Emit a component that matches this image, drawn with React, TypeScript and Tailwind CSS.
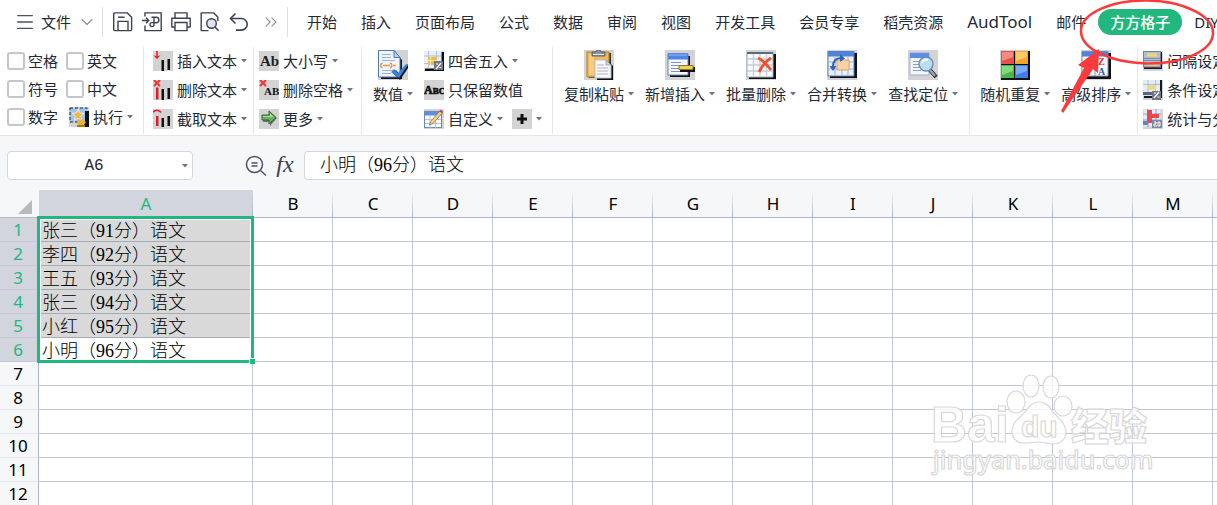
import type { ReactNode } from "react";
import { ChevronDown, ChevronsRight, Menu } from "lucide-react";

const tabs = [
  "开始",
  "插入",
  "页面布局",
  "公式",
  "数据",
  "审阅",
  "视图",
  "开发工具",
  "会员专享",
  "稻壳资源",
  "AudTool",
  "邮件",
  "方方格子",
  "DIY工具箱",
];

const activeTab = "方方格子";

const columns = ["A", "B", "C", "D", "E", "F", "G", "H", "I", "J", "K", "L", "M", "N"];

const cellValues = [
  "张三（91分）语文",
  "李四（92分）语文",
  "王五（93分）语文",
  "张三（94分）语文",
  "小红（95分）语文",
  "小明（96分）语文",
];

const rows = Array.from({ length: 14 }, (_, index) => index + 1);

function Caret() {
  return (
    <svg viewBox="0 0 6 4" className="h-1 w-1.5 shrink-0" aria-hidden="true">
      <path d="M0 0h6L3 3.6z" fill="#6b7388" />
    </svg>
  );
}

function Tile({ children, size = 20 }: { children?: ReactNode; size?: 20 | 30 }) {
  return (
    <svg
      viewBox={`0 0 ${size} ${size}`}
      className={size === 30 ? "h-[30px] w-[30px] shrink-0" : "h-5 w-5 shrink-0"}
      aria-hidden="true"
    >
      <rect width={size} height={size} fill="#d3d3d3" />
      {children}
    </svg>
  );
}

/* quick access icons */

function SaveIcon() {
  return (
    <svg viewBox="0 0 20 20" className="h-5 w-5" fill="none" stroke="#3b4252" strokeWidth="1.4">
      <path d="M1.7.9h12.6l4.3 4.3v12.2a1.2 1.2 0 0 1-1.2 1.2H1.7a1 1 0 0 1-1-1V1.9a1 1 0 0 1 1-1z" />
      <path d="M5 18.2V9.4h10v8.8M5 5.2h6.5" />
    </svg>
  );
}

function ExportPdfIcon() {
  return (
    <svg viewBox="0 0 20 20" className="h-5 w-5" fill="none" stroke="#3b4252" strokeWidth="1.4">
      <path d="M3 4.500V.9h16.200v17.700H3v-5" />
      <path d="M0 8.500h6.500M4 5.800l2.700 2.700L4 11.200" />
      <path d="M9.500 5.200h4.600a2.800 2.800 0 0 1 0 5.600H12M12 5.200v7.400a2 2 0 1 1-2-2h2" />
    </svg>
  );
}

function PrintIcon() {
  return (
    <svg viewBox="0 0 20 20" className="h-5 w-5" fill="none" stroke="#3b4252" strokeWidth="1.4">
      <path d="M4 6V.9h12V6" />
      <path d="M4 15H.8V6.200h18.400V15H16" strokeLinejoin="round" />
      <path d="M4 10.500h12v8.100H4z" />
    </svg>
  );
}

function PreviewIcon() {
  return (
    <svg viewBox="0 0 20 20" className="h-5 w-5" fill="none" stroke="#3b4252" strokeWidth="1.4">
      <path d="M8.500 18.600H1.200V.9h12.600l4 4V9" strokeLinejoin="round" />
      <circle cx="11.500" cy="11.500" r="4.800" fill="#dfe4ea" />
      <path d="m15 15 3.600 3.800" />
    </svg>
  );
}

function UndoIcon() {
  return (
    <svg viewBox="0 0 20 20" className="h-5 w-5" fill="none" stroke="#3b4252" strokeWidth="1.6">
      <path d="M6.500 1.500 1.500 6.500l5 5" />
      <path d="M1.800 6.500h10.600a5.800 5.800 0 0 1 0 11.600H7" />
    </svg>
  );
}

/* small ribbon icons, 20 x 20 */

function RunIcon() {
  return (
    <Tile>
      <rect x="1" y="1" width="17" height="14" fill="#9cc6ee" stroke="#1f2a38" strokeDasharray="3 2" />
      <path d="M16 4h4v16H9l1-4h6z" fill="#111" />
      <path d="m9 2 1.800 4 4.200.4-3.200 2.800 1 4.200L9 11.200l-3.800 2.200 1-4.200L3 6.400 7.200 6z" fill="#ffb545" stroke="#fff" strokeWidth=".7" />
      <path d="M8 15c2-3 4-3 7-1l2 1-2 3H9z" fill="#e9b22f" />
      <path d="M8 18h8v2H8z" fill="#a6780f" />
    </Tile>
  );
}

function TextInsertIcon() {
  return (
    <Tile>
      <path d="M8.500 9H11v11H8.500zM14.500 8H17v11h-2.500z" fill="#111" />
      <path d="M4 0v6" stroke="#f0131a" strokeWidth="1.500" />
      <path d="M.5 4.200 4 5.500l3.500-1.300L4 8z" fill="#f0131a" />
    </Tile>
  );
}

function TextDeleteIcon() {
  return (
    <Tile>
      <path d="M8.500 9H11v11H8.500zM14.500 8H17v11h-2.500z" fill="#111" />
      <path d="M3 7.500h2.500v12H3z" fill="#d5202a" />
      <path d="m1 0 6 6M7 0 1 6" stroke="#ee3a3a" strokeWidth="2.200" />
    </Tile>
  );
}

function TextCutIcon() {
  return (
    <Tile>
      <path d="M8.500 9H11v9H8.500zM14.500 7H17v10h-2.500z" fill="#111" />
      <path d="M3 7h2.500v10H3z" fill="#d5202a" />
      <path d="M0 3.500C1.500.500 6 .500 8 3.500" fill="none" stroke="#f0131a" strokeWidth="1.600" />
    </Tile>
  );
}

function CaseIcon() {
  return (
    <Tile>
      <text x="1" y="15" fontFamily="Liberation Serif, serif" fontWeight="700" fontSize="15" fill="#222">
        Ab
      </text>
    </Tile>
  );
}

function DeleteSpaceIcon() {
  return (
    <Tile>
      <text x="5" y="15" fontFamily="Liberation Serif, serif" fontWeight="700" fontSize="11" fill="#111">
        AB
      </text>
      <path d="m1 0 6 6M7 0 1 6" stroke="#ee3a3a" strokeWidth="2.200" />
    </Tile>
  );
}

function MoreIcon() {
  return (
    <Tile>
      <path d="M4 7h7V3l7 6-7 8v-4H4z" fill="#333" opacity=".6" />
      <path d="M3 6h7V2l7 6.500L10 15v-4H3z" fill="#69b25e" stroke="#2d5b2d" strokeWidth=".9" />
      <path d="M4 7h7V4.500L14.500 8H4z" fill="#a9dba0" />
    </Tile>
  );
}

function RoundIcon() {
  return (
    <Tile>
      <path d="M17 1h3v19H1v-3h16z" fill="#111" />
      <rect x="0" y="0" width="17.500" height="17.500" fill="#e9eff8" />
      <path d="M0 5h17M0 12.500h17M4.500 0v17M12.500 0v17" stroke="#a9b5cb" strokeWidth=".8" />
      <path d="M4 6h9v8H4z" fill="#e6c04a" />
      <path d="M6.500 6v8M4 9.500h9" stroke="#fff0b0" strokeWidth=".8" />
      <path d="M10 10h9v9h-9z" fill="#707786" />
      <path d="m12 18 5-6M12 13h2M15.500 16.500h2" stroke="#fff" strokeWidth="1.200" />
    </Tile>
  );
}

function KeepValueIcon() {
  return (
    <Tile>
      <g fontFamily="Liberation Serif, serif" fontWeight="700" fill="#111" stroke="#111" strokeWidth=".7">
        <text x="0" y="14" fontSize="12">
          A<tspan fontSize="9">BC</tspan>
        </text>
      </g>
    </Tile>
  );
}

function CustomIcon() {
  return (
    <Tile>
      <rect x=".5" y="2.500" width="17" height="16" fill="#fafcff" stroke="#6b8bbd" />
      <path d="M1 3h16v3.500H1z" fill="#5d8fe0" />
      <path d="M1 10.500h16M1 14.500h16M6 7v12M11.500 7v12" stroke="#b4c4df" />
      <path d="m5.500 16 1-3.500L16 2l2.500 2L9 14.500z" fill="#f1cf86" stroke="#8b6428" strokeWidth=".7" />
      <path d="M15.500 2.200 18 4.300l1.200-1.600-2.500-2z" fill="#b8404a" />
    </Tile>
  );
}

function PlusIcon() {
  return (
    <Tile>
      <path d="M10 5v10M5 10h10" stroke="#111" strokeWidth="3" />
    </Tile>
  );
}

function IntervalIcon() {
  return (
    <Tile>
      <path d="M17 1h2v17H1v-2h16z" fill="#151a22" />
      <rect x=".5" y=".5" width="17" height="15.500" fill="#b5bfcf" stroke="#76829a" />
      <path d="M1 7.500h16M1 9.500h16" stroke="#7d899e" />
      <path d="M4 2.500h10v3H4zM4 11.500h10v3H4z" fill="#f0d779" />
    </Tile>
  );
}

function ConditionIcon() {
  return (
    <Tile>
      <path d="M17 0h2v18H1v-2h16z" fill="#151a22" />
      <rect x="0" y="0" width="17" height="15.500" fill="#e5ebf4" />
      <path d="M0 4.500h17M5 0v15M12.500 0v15" stroke="#aab4c6" strokeWidth=".8" />
      <path d="M4 5.500h9v4H4z" fill="#f0d779" />
      <path d="M0 12h14v3H0z" fill="#5a667d" />
      <path d="M9 11h9v9H9z" fill="#707786" />
      <path d="m11 18 5-6M11 13h2M14.500 17h2" stroke="#fff" strokeWidth="1.200" />
    </Tile>
  );
}

function StatsIcon() {
  return (
    <Tile>
      <rect x=".5" y=".5" width="17" height="17" fill="#e4ecf8" />
      <path d="M0 5h18M0 11h18M5 0v18M13 0v18" stroke="#8aa0c8" />
      <path d="M4 1h5v13H4z" fill="#e8474f" />
      <path d="M8 5h8v4H8z" fill="#e8474f" />
      <path d="M0 12h5v4H0z" fill="#5d83c9" />
      <path d="M9 11h10v8H9z" fill="#7c8798" />
      <path d="M11 13h2v2h-2v2h3M15 13h2v4h-2z" stroke="#fff" fill="none" />
    </Tile>
  );
}

/* large ribbon icons, 30 x 30 */

function ValueIcon() {
  return (
    <Tile size={30}>
      <path d="M3 3h15l6 7v19H3z" fill="#14181e" />
      <path d="M.5.500H16l6 7V27H.5z" fill="#eef4fc" stroke="#4f78b4" />
      <path d="M16 .5v7h6z" fill="#b8d0ee" stroke="#4f78b4" />
      <path d="M4 4.500h9M4 7.500h9M4 10.500h13M4 20.500h11M4 23.500h9" stroke="#9db1d2" />
      <path d="M4.500 13C2 14 2 17 4.500 18M12 13c2.500 1 2.500 4 0 5M5 15.500h7M15 15.500h3" stroke="#ee9448" strokeWidth="1.500" fill="none" />
      <path d="m15 23 3-3 4 5 8-11v4l-8 12z" fill="#111" />
      <path d="m13 22 3-3 4 4 8-9 2 1-9 13z" fill="#3b7fd8" />
    </Tile>
  );
}

function PasteIcon() {
  return (
    <Tile size={30}>
      <path d="M5 3h22v25H5z" fill="#15110a" opacity=".8" />
      <path d="M3 2h22v25H3z" fill="#eeb85b" stroke="#b47b2b" />
      <path d="M5 4h5v21H5z" fill="#f6cb7d" />
      <path d="M8 2h4c0-3 5-3 5 0h4v4H8z" fill="#8a929f" stroke="#4c535e" strokeWidth=".8" />
      <path d="M9 4.500h11" stroke="#e4e8ee" />
      <path d="M13 12h12l4 4v14H13z" fill="#111" />
      <path d="M11 10h11l5 5v13H11z" fill="#f6f8fb" stroke="#b9c0ca" />
      <path d="M22 10v5h5z" fill="#c9d0da" stroke="#8d96a5" strokeWidth=".7" />
      <path d="M13 15h7M13 18h11M13 21h11M13 24h11" stroke="#b0b8c4" />
    </Tile>
  );
}

function InsertIcon() {
  return (
    <Tile size={30}>
      <path d="M5 6h20v21H5z" fill="#111" />
      <path d="M3 3.500h20V25H3z" fill="#f3f6fb" stroke="#7288b0" />
      <path d="M3 3.500h20v6H3z" fill="#4f86e6" />
      <path d="M4 5h18" stroke="#96b9f5" />
      <path d="M6 12.500h10M6 15.500h13M6 18.500h8M6 21.500h9" stroke="#8793a8" />
      <path d="M15 17h15v5H15z" fill="#111" />
      <path d="M14 15.500h14v4H14z" fill="#f0d358" stroke="#8e7425" />
    </Tile>
  );
}

function BatchDeleteIcon() {
  return (
    <Tile size={30}>
      <path d="M3 4h27v25H3z" fill="#111" />
      <path d="M1 2.500h26V27H1z" fill="#f8fafc" stroke="#a3adb8" />
      <path d="M1 3h26" stroke="#5b6a80" strokeWidth="2" />
      <path d="M1 9h26M1 15h26M1 21h26M7.500 4v23M14 4v23M20.500 4v23" stroke="#c6ccd3" strokeWidth="1.300" />
      <path d="M12 8c5 2 9 7 13 12M25 8c-5 3-9 8-12 14" stroke="#f2502e" strokeWidth="2.800" fill="none" />
    </Tile>
  );
}

function MergeIcon() {
  return (
    <Tile size={30}>
      <path d="M3 3h27v25H3z" fill="#111" />
      <path d="M1 1.500h26V26H1z" fill="#e9f0fa" stroke="#5b7fb8" />
      <path d="M1 1.500h26v5H1z" fill="#4f82d8" />
      <path d="M1 12h26M1 19h26M8 7v19M15 7v19M21 7v19" stroke="#93b0dc" />
      <path d="M10 10h12v10H10z" fill="#f8d2a4" stroke="#e3a25d" />
      <path d="M6 17c0-6 3-9 8-9" fill="none" stroke="#3263b3" strokeWidth="2" />
      <path d="m13 4 5 4.500-5 3.500zM2.500 16h7L6 21z" fill="#3263b3" />
    </Tile>
  );
}

function FindIcon() {
  return (
    <Tile size={30}>
      <path d="M2 3h19v22H2z" fill="#f2f6fb" stroke="#a4b2c8" />
      <path d="M2 3h19v5H2z" fill="#5b8ee6" />
      <path d="M5 11.500h8M5 14.500h7M5 17.500h6M5 20.500h8" stroke="#8fa0bd" />
      <path d="m22 20 6 7" stroke="#222" strokeWidth="4" />
      <path d="m22 20 5 6" stroke="#a0a7b2" strokeWidth="2.500" />
      <circle cx="18" cy="14" r="7" fill="#b9ddf5" stroke="#7489a3" strokeWidth="1.400" />
      <path d="M14 13c1-3 4-4 6-3" fill="none" stroke="#fff" strokeWidth="1.500" />
    </Tile>
  );
}

function RandomIcon() {
  return (
    <Tile size={30}>
      <path d="M1 1h29v29H1z" fill="#111" />
      <path d="M1 1h13v13H1z" fill="#e94f4a" />
      <path d="M15 1h13v13H15z" fill="#f3a625" />
      <path d="M1 15h13v13H1z" fill="#47b948" />
      <path d="M15 15h13v13H15z" fill="#3f7de8" />
      <path d="M2 2h11v5L2 11z" fill="#f78983" />
      <path d="M16 2h11v5l-11 4z" fill="#f9c965" />
      <path d="M2 16h11v5L2 25z" fill="#83da7c" />
      <path d="M16 16h11v5l-11 4z" fill="#7aa9f5" />
    </Tile>
  );
}

function SortIcon() {
  return (
    <Tile size={30}>
      <path d="M3 3h27v26H3z" fill="#111" />
      <path d="M1 1.500h26V26H1z" fill="#f1f4f9" stroke="#8797b0" />
      <path d="M1 1.500h26v5H1z" fill="#4f82d8" />
      <path d="M14 7v19" stroke="#8797b0" />
      <g fontFamily="Liberation Serif, serif" fontWeight="700" fontSize="10">
        <text x="3" y="15" fill="#3f5f9e">A</text>
        <text x="3" y="25" fill="#c03a3a">Z</text>
        <text x="17" y="15" fill="#c03a3a">Z</text>
        <text x="17" y="25" fill="#3f5f9e">A</text>
      </g>
    </Tile>
  );
}

function SmallAction({ icon, label, caret = true }: { icon: ReactNode; label: string; caret?: boolean }) {
  return (
    <button type="button" className="flex h-5 items-center gap-1 whitespace-nowrap">
      {icon}
      <span>{label}</span>
      {caret ? <Caret /> : null}
    </button>
  );
}

function LargeAction({ icon, label }: { icon: ReactNode; label: string }) {
  return (
    <button type="button" className="flex flex-col items-center gap-1 whitespace-nowrap">
      {icon}
      <span className="flex h-5 items-center gap-1">
        <span>{label}</span>
        <Caret />
      </span>
    </button>
  );
}

function Separator() {
  return <div className="h-[87px] w-px shrink-0 bg-[#e6e7ea]" />;
}

function CheckOption({ label }: { label: string }) {
  return (
    <label className="flex h-5 items-center gap-[3px] whitespace-nowrap">
      <input
        type="checkbox"
        className="h-[18px] w-[18px] shrink-0 appearance-none rounded-[3px] border-2 border-[#c3c6cb] bg-white checked:bg-[#22b77d]"
      />
      {label}
    </label>
  );
}

/* hand drawn ring and pointer over the active tab */
function TabMarker() {
  return (
    <svg
      viewBox="0 0 160 120"
      className="pointer-events-none absolute -left-10 -top-[9px] z-10 h-[120px] w-40 max-w-none"
      aria-hidden="true"
    >
      <ellipse cx="89" cy="32" rx="66" ry="31.500" fill="none" stroke="#fb3b3b" strokeWidth="2.500" transform="rotate(1 89 32)" />
      <path d="M41 49 20 65l6 3L3 111l2 2 30-44 5 4z" fill="#fb3b3b" />
    </svg>
  );
}

function MenuBar() {
  return (
    <header className="flex h-11 shrink-0 items-center">
      <button type="button" className="ml-3.5 flex shrink-0 items-center whitespace-nowrap">
        <Menu size={22} strokeWidth={1.5} color="#4b5260" />
        <span className="ml-[5px]">文件</span>
        <ChevronDown size={20} strokeWidth={1.3} color="#8a8f99" className="ml-1.5" />
      </button>
      <div className="ml-[5px] h-[30px] w-px shrink-0 bg-[#dcdde1]" />
      <div className="ml-2.5 flex shrink-0 items-center gap-[9px]">
        <button type="button" aria-label="保存"><SaveIcon /></button>
        <button type="button" aria-label="输出为PDF"><ExportPdfIcon /></button>
        <button type="button" aria-label="打印"><PrintIcon /></button>
        <button type="button" aria-label="打印预览"><PreviewIcon /></button>
        <button type="button" aria-label="撤销"><UndoIcon /></button>
      </div>
      <button type="button" aria-label="更多命令" className="ml-3 shrink-0">
        <ChevronsRight size={20} strokeWidth={1.3} color="#8a8f99" />
      </button>
      <div className="ml-1.5 h-[30px] w-px shrink-0 bg-[#dcdde1]" />
      <nav className="ml-[7px] flex items-center">
        {tabs.map((tab) =>
          tab === activeTab ? (
            <div key={tab} className="relative shrink-0">
              <button type="button" className="block h-[26px] rounded-full bg-[#22b77d] px-3 font-medium whitespace-nowrap text-white">
                {tab}
              </button>
              <TabMarker />
            </div>
          ) : (
            <button
              key={tab}
              type="button"
              className={["h-[26px] shrink-0 px-3 whitespace-nowrap", tab === "AudTool" ? "text-[17px]" : ""].join(" ")}
            >
              {tab}
            </button>
          ),
        )}
      </nav>
    </header>
  );
}

function Ribbon() {
  return (
    <section className="flex h-[92px] shrink-0 items-start overflow-hidden border-b border-[#e4e6ea] pt-[3px]">
      <div className="grid shrink-0 grid-cols-[59px_77px] gap-y-2 pt-1 pl-[7px]">
        <CheckOption label="空格" />
        <CheckOption label="英文" />
        <CheckOption label="符号" />
        <CheckOption label="中文" />
        <CheckOption label="数字" />
        <div className="pl-[3px]">
          <SmallAction icon={<RunIcon />} label="执行" />
        </div>
      </div>
      <Separator />
      <div className="flex shrink-0 flex-col gap-[9px] pt-1 pr-1.5 pl-[9px]">
        <SmallAction icon={<TextInsertIcon />} label="插入文本" />
        <SmallAction icon={<TextDeleteIcon />} label="删除文本" />
        <SmallAction icon={<TextCutIcon />} label="截取文本" />
      </div>
      <Separator />
      <div className="flex shrink-0 flex-col gap-[9px] pt-1 pr-2 pl-[5px]">
        <SmallAction icon={<CaseIcon />} label="大小写" />
        <SmallAction icon={<DeleteSpaceIcon />} label="删除空格" />
        <SmallAction icon={<MoreIcon />} label="更多" />
      </div>
      <Separator />
      <div className="flex shrink-0 gap-[11px] pt-[3px] pl-[11px]">
        <LargeAction icon={<ValueIcon />} label="数值" />
        <div className="flex flex-col gap-[9px] pt-px pr-2.5">
          <SmallAction icon={<RoundIcon />} label="四舍五入" />
          <SmallAction icon={<KeepValueIcon />} label="只保留数值" caret={false} />
          <div className="flex gap-[9px]">
            <SmallAction icon={<CustomIcon />} label="自定义" />
            <button type="button" aria-label="新增" className="flex items-center gap-1">
              <PlusIcon />
              <Caret />
            </button>
          </div>
        </div>
      </div>
      <Separator />
      <div className="flex shrink-0 gap-[11px] px-[11px] pt-[3px]">
        <LargeAction icon={<PasteIcon />} label="复制粘贴" />
        <LargeAction icon={<InsertIcon />} label="新增插入" />
        <LargeAction icon={<BatchDeleteIcon />} label="批量删除" />
        <LargeAction icon={<MergeIcon />} label="合并转换" />
        <LargeAction icon={<FindIcon />} label="查找定位" />
      </div>
      <Separator />
      <div className="flex shrink-0 gap-[11px] pt-[3px] pr-1.5 pl-2.5">
        <LargeAction icon={<RandomIcon />} label="随机重复" />
        <LargeAction icon={<SortIcon />} label="高级排序" />
      </div>
      <Separator />
      <div className="flex shrink-0 flex-col gap-[9px] pt-1 pl-[5px]">
        <SmallAction icon={<IntervalIcon />} label="间隔设定" />
        <SmallAction icon={<ConditionIcon />} label="条件设定" />
        <SmallAction icon={<StatsIcon />} label="统计与分析" />
      </div>
    </section>
  );
}

function FormulaBar() {
  return (
    <div className="flex shrink-0 items-center pt-[15px] pb-2.5 pl-[7px]">
      <div className="flex h-[29px] w-[186px] shrink-0 items-center rounded-sm border border-[#d5d7dd] bg-white pr-1">
        <input
          aria-label="名称框"
          defaultValue="A6"
          className="w-full min-w-0 pr-1.5 pl-1 text-center font-['Liberation_Mono',monospace] text-[16px] text-[#22252b] outline-none"
        />
        <Caret />
      </div>
      <button type="button" aria-label="浏览公式结果" className="ml-[52px] shrink-0">
        <svg viewBox="0 0 22 22" className="h-[22px] w-[22px]" fill="none" stroke="#4b5262" strokeWidth="1.500">
          <circle cx="9.500" cy="9.500" r="8" />
          <path d="m15.500 15.500 5.500 5M6.500 8h6M6.500 11h6" />
        </svg>
      </button>
      <button
        type="button"
        aria-label="插入函数"
        className="ml-2 w-5 shrink-0 pb-1 font-['Liberation_Serif',serif] text-[24px] leading-6 text-[#3b4252] italic"
      >
        fx
      </button>
      <input
        aria-label="编辑栏"
        defaultValue="小明（96分）语文"
        className="ml-[9px] h-[29px] min-w-0 flex-1 rounded-l-sm border border-r-0 border-[#d5d7dd] bg-white pb-1.5 pl-[15px] font-['Liberation_Serif','Noto_Sans_CJK_SC',serif] text-[18px] leading-5 font-light text-black outline-none"
      />
    </div>
  );
}

function Watermark() {
  return (
    <svg
      viewBox="0 0 230 110"
      className="pointer-events-none absolute top-[180px] right-[60px] h-[110px] w-[230px]"
      fill="#ffffff"
      fillOpacity=".8"
      stroke="#d8d8d8"
      strokeWidth="1.200"
      aria-hidden="true"
    >
      <ellipse cx="89" cy="32" rx="9" ry="11" />
      <ellipse cx="104" cy="16" rx="8" ry="11" />
      <ellipse cx="124" cy="17" rx="8" ry="11" />
      <ellipse cx="136" cy="36" rx="9" ry="10" />
      <path d="M112 32c-7 0-10 5-14 10-5 6-13 10-13 19 0 9 7 13 14 12 5 0 8-1 13-1s8 2 14 2c8 0 13-5 13-12 0-9-8-14-13-20-4-6-7-10-14-10z" />
      <text x="4" y="72" fontFamily="Liberation Sans, sans-serif" fontWeight="700" fontSize="50">
        Bai
      </text>
      <text x="94" y="67" fontFamily="Liberation Sans, sans-serif" fontWeight="700" fontSize="30">
        du
      </text>
      <text x="144" y="70" fontFamily="Noto Sans CJK SC, sans-serif" fontWeight="900" fontSize="38">
        经验
      </text>
      <text x="6" y="99" fontFamily="Noto Sans, sans-serif" fontWeight="500" fontSize="25">
        jingyan.baidu.com
      </text>
    </svg>
  );
}

function Sheet() {
  return (
    <main className="relative min-h-0 flex-1 overflow-hidden bg-white">
      <table className="w-[1293px] table-fixed border-separate border-spacing-0 text-[17px] leading-5 text-black">
        <colgroup>
          <col className="w-[39px]" />
          <col className="w-[214px]" />
          <col span={13} className="w-20" />
        </colgroup>
        <thead>
          <tr className="h-7 bg-[#f5f7f9]">
            <th className="border-b border-[#adb5cb] p-0">
              <svg viewBox="0 0 14 14" className="mt-1.5 mr-[7px] ml-auto h-3.5 w-3.5" aria-hidden="true">
                <path d="M14 0v14H0z" fill="#b9b9b9" />
              </svg>
            </th>
            {columns.map((column) => (
              <th
                key={column}
                scope="col"
                className={[
                  "border-b border-[#adb5cb] bg-linear-to-b from-transparent to-[#adb5cb] bg-[length:1px_100%] bg-right bg-no-repeat p-0 font-normal",
                  column === "A" ? "bg-[#d2d5de] text-[#22b77d]" : "",
                ].join(" ")}
              >
                {column}
              </th>
            ))}
          </tr>
        </thead>
        <tbody>
          {rows.map((row) => {
            const selected = row <= cellValues.length;
            const filled = row < cellValues.length;

            return (
              <tr key={row} className="h-6">
                <th
                  scope="row"
                  className={[
                    "border-r border-b p-0 pr-0.5 font-normal",
                    selected
                      ? "border-[#c6cad8] bg-[#d2d5de] text-[#22b77d]"
                      : "border-r-[#adb5cb] border-b-[#e3e6ee] bg-[#f5f7f9]",
                  ].join(" ")}
                >
                  {row}
                </th>
                {columns.map((column) => (
                  <td
                    key={column}
                    className={[
                      "border-r border-b p-0 pt-0.5 pl-[3px] font-['Liberation_Serif','Noto_Sans_CJK_SC',serif] text-[18px] font-light whitespace-nowrap",
                      column === "A" && filled
                        ? "border-r-[#c0c6da] border-b-[#a5abb9] bg-[#d9d9d9]"
                        : "border-[#c0c6da]",
                    ].join(" ")}
                  >
                    {column === "A" ? cellValues[row - 1] : null}
                  </td>
                ))}
              </tr>
            );
          })}
        </tbody>
      </table>

      {/* selection frame A1:A6 with its fill handle */}
      <div className="pointer-events-none absolute top-[26px] left-[37px] h-[147px] w-[217px] border-3 border-[#22b77d]">
        <div className="h-full w-full border border-white" />
        <div className="absolute -right-1 -bottom-1 h-1.5 w-1.5 border-t border-l border-white bg-[#22b77d]" />
      </div>

      <Watermark />
    </main>
  );
}

export default function App() {
  return (
    <div className="flex h-screen flex-col overflow-hidden bg-[#f5f7f9] font-['Noto_Sans','Noto_Sans_CJK_SC',sans-serif] text-[15px] leading-5 text-[#242936]">
      <div className="shrink-0 bg-white">
        <MenuBar />
        <Ribbon />
      </div>
      <FormulaBar />
      <Sheet />
    </div>
  );
}
